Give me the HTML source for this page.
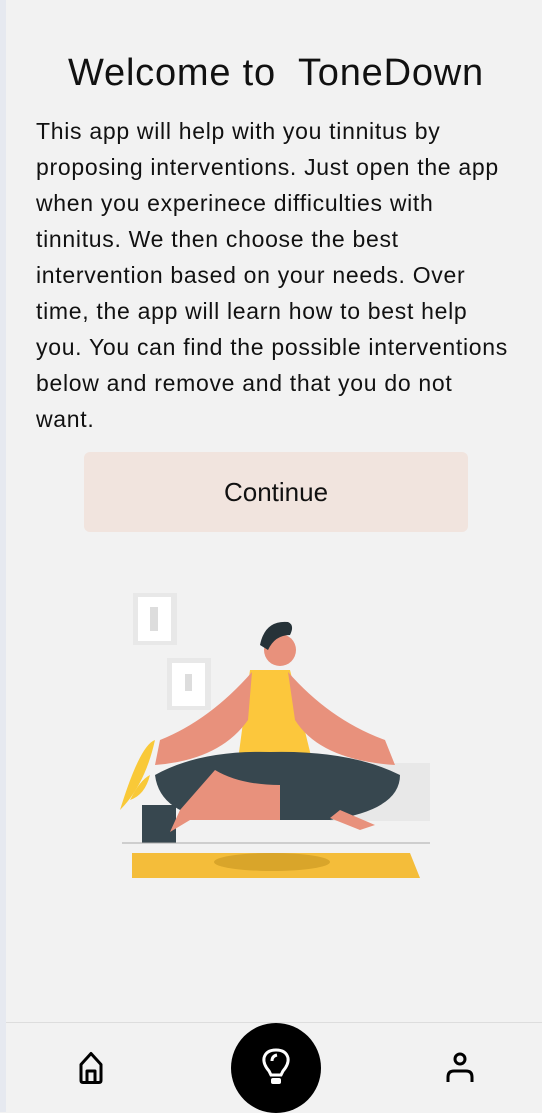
<!DOCTYPE html>
<html><head><meta charset="utf-8"><style>
html,body{margin:0;padding:0}
body{width:542px;height:1112px;background:#f2f2f2;position:relative;overflow:hidden;font-family:"Liberation Sans",sans-serif;color:#111}
.strip{position:absolute;left:0;top:0;width:6px;height:1112px;background:#e6e9f0}
h1{position:absolute;left:0;width:552px;top:51px;margin:0;text-align:center;font-weight:normal;font-size:38px;letter-spacing:0.8px;line-height:44px}
.p{position:absolute;left:36px;top:113px;font-size:23px;letter-spacing:0.7px;line-height:36px;white-space:nowrap}
.btn{position:absolute;left:84px;top:452px;width:384px;height:80px;background:#f1e4de;border-radius:6px;text-align:center;line-height:80px;font-size:26px}
.nav{position:absolute;left:6px;top:1022px;width:536px;height:90px;border-top:1px solid #ddd}
.fab{position:absolute;left:231px;top:1023px;width:90px;height:90px;border-radius:50%;background:#000}
</style></head><body>
<div class="strip"></div>
<h1>Welcome to&nbsp; ToneDown</h1>
<div class="p">This app will help with you tinnitus by<br>proposing interventions. Just open the app<br>when you experinece difficulties with<br>tinnitus. We then choose the best<br>intervention based on your needs. Over<br>time, the app will learn how to best help<br>you. You can find the possible interventions<br>below and remove and that you do not<br>want.</div>
<div class="btn">Continue</div>
<svg style="position:absolute;left:100px;top:570px" width="340" height="320" viewBox="0 0 340 320">
<rect x="33" y="23" width="44" height="52" fill="#e8e8e8"/><rect x="38" y="27" width="33" height="44" fill="#fff"/><rect x="50" y="37" width="8" height="24" fill="#ddd"/>
<rect x="67" y="88" width="44" height="52" fill="#e8e8e8"/><rect x="72" y="93" width="33" height="43" fill="#fff"/><rect x="85" y="104" width="7" height="17" fill="#ddd"/>
<rect x="230" y="193" width="100" height="58" fill="#e8e8e8"/>
<path d="M20 240 Q40 175 55 170 Q45 215 20 240Z" fill="#f9c938"/>
<path d="M30 230 Q40 210 50 205 Q45 225 30 230Z" fill="#f9c938"/>
<rect x="42" y="235" width="34" height="38" fill="#37474f"/>
<line x1="22" y1="273" x2="330" y2="273" stroke="#aaa" stroke-width="1"/>
<path d="M32 283 L310 283 L320 308 L32 308 Z" fill="#f4bd3a"/>
<ellipse cx="172" cy="292" rx="58" ry="9" fill="#d9a52a"/>
<path d="M150 100 L190 100 L212 190 L138 190 Z" fill="#fcc73c"/>
<path d="M152 102 Q110 150 60 170 L55 195 Q120 190 148 150Z" fill="#e8917c"/>
<path d="M188 102 Q230 150 285 170 L295 195 Q220 190 195 150Z" fill="#e8917c"/>
<path d="M55 205 Q100 180 170 182 Q250 180 300 205 Q300 240 230 250 L120 250 Q60 245 55 205Z" fill="#37474f"/>
<path d="M115 200 Q140 215 180 215 L180 250 L90 250 L70 262 L80 240Z" fill="#e8917c"/>
<path d="M240 240 L275 255 L260 260 L230 248Z" fill="#e8917c"/>
<circle cx="180" cy="80" r="16" fill="#e8917c"/>
<path d="M160 75 Q165 50 188 52 Q195 55 190 65 Q175 65 168 80Z" fill="#263238"/>
</svg>
<div class="nav"></div>
<svg style="position:absolute;left:74px;top:1049px" width="36" height="36" viewBox="0 0 36 36" fill="none" stroke="#000" stroke-width="3" stroke-linejoin="round"><path d="M4 16 L14 5 L24 16 L24 32 Q24 34 22 34 L6 34 Q4 34 4 32Z" transform="translate(3,-0.5)"/><path d="M13 33 L13 22 L21 22 L21 33"/></svg>
<div class="fab"></div>
<svg style="position:absolute;left:252px;top:1047px" width="48" height="42" viewBox="0 0 48 42" fill="none" stroke="#fff" stroke-width="3"><path d="M17 24 Q11 17 12 11 Q14 3 24 3 Q34 3 36 11 Q37 17 31 24 L29 28 L19 28 Z"/><path d="M20 14 Q20 9 25 8"/><rect x="19" y="31" width="10" height="6" rx="2" fill="#fff" stroke="none"/></svg>
<svg style="position:absolute;left:442px;top:1049px" width="36" height="36" viewBox="0 0 36 36" fill="none" stroke="#000" stroke-width="3"><circle cx="18" cy="10" r="5"/><path d="M6 33 L6 28 Q6 22 12 22 L24 22 Q30 22 30 28 L30 33"/></svg>
</body></html>
